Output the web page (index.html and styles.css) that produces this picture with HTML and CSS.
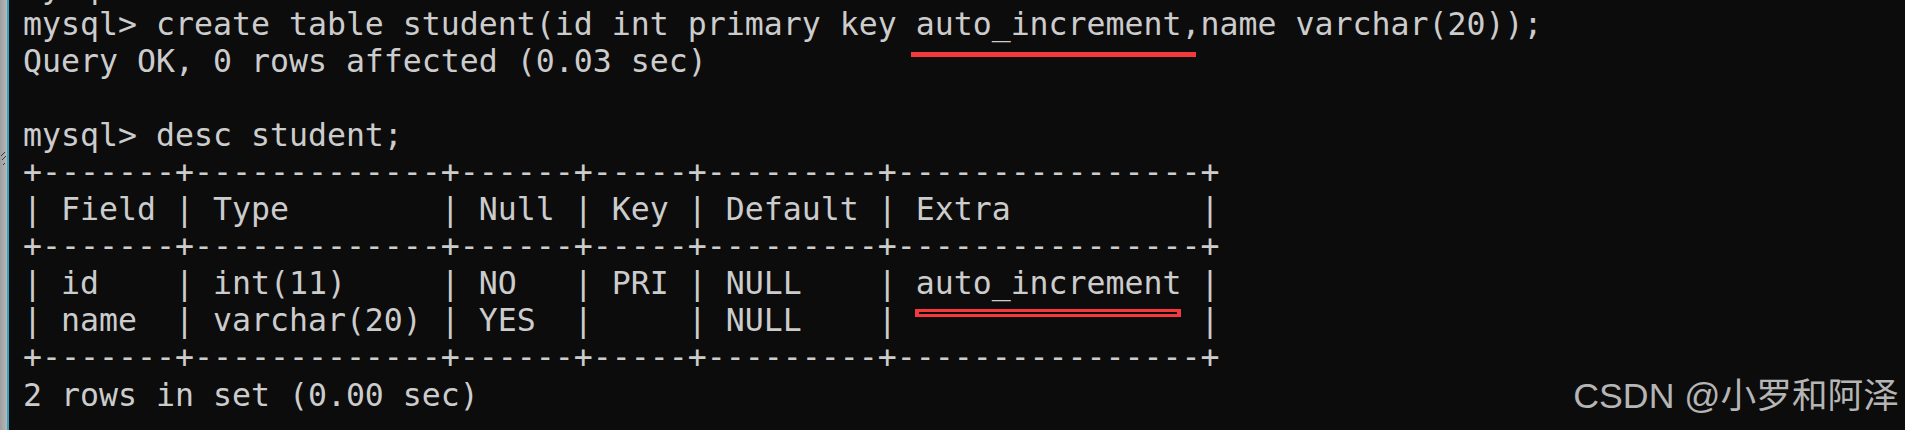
FILE: index.html
```html
<!DOCTYPE html>
<html lang="zh-CN">
<head>
<meta charset="utf-8">
<title>mysql desc student</title>
<link rel="stylesheet" href="styles.css">
</head>
<body>
<div class="window">
  <div class="edge">
    <svg class="edge-mark" width="7" height="24" viewBox="0 0 7 24"><path d="M1 6 L5 2 M2 10 L6 6 M3 15 L5 13" stroke="#333" stroke-width="1"/></svg>
  </div>
  <div class="accent"></div>
  <div class="terminal">
<pre class="screen">mysql&gt;
mysql&gt; create table student(id int primary key auto_increment,name varchar(20));
Query OK, 0 rows affected (0.03 sec)

mysql&gt; desc student;
+-------+-------------+------+-----+---------+----------------+
| Field | Type        | Null | Key | Default | Extra          |
+-------+-------------+------+-----+---------+----------------+
| id    | int(11)     | NO   | PRI | NULL    | auto_increment |
| name  | varchar(20) | YES  |     | NULL    |                |
+-------+-------------+------+-----+---------+----------------+
2 rows in set (0.00 sec)</pre>
    <div class="mark mark-line"></div>
    <div class="mark mark-box"></div>
  </div>
  <div class="watermark">CSDN @小罗和阿泽</div>
</div>
</body>
</html>
```

FILE: styles.css
```css
html, body {
  margin: 0;
  padding: 0;
  background: #0c0c0c;
}

.window {
  position: relative;
  display: flex;
  width: 1905px;
  height: 430px;
  overflow: hidden;
  background: #0c0c0c;
}

.edge {
  width: 7px;
  flex: none;
  background: linear-gradient(90deg, #9e9e9e, #b8b8b8);
  display: flex;
  flex-direction: column;
  padding-top: 150px;
  box-sizing: border-box;
}

.edge-mark {
  display: block;
}

.accent {
  width: 2px;
  flex: none;
  background: #34a1bf;
}

.terminal {
  position: relative;
  flex: 1;
  padding-left: 14px;
}

.screen {
  margin: -31.5px 0 0 0;
  font-family: "DejaVu Sans Mono", monospace;
  font-size: 31.56px;
  line-height: 37.1px;
  color: #cccccc;
  white-space: pre;
}

.mark {
  position: absolute;
  box-sizing: border-box;
}

.mark-line {
  left: 902px;
  top: 52px;
  width: 285px;
  height: 5px;
  background: #f4383c;
}

.mark-box {
  left: 906px;
  top: 309px;
  width: 266px;
  height: 8px;
  border: 3px solid #f4383c;
  border-left-width: 4px;
  border-right-width: 4px;
}

.watermark {
  position: absolute;
  right: 6px;
  top: 379px;
  font-family: "Liberation Sans", "Noto Sans CJK SC", sans-serif;
  font-size: 35.7px;
  line-height: 35.7px;
  color: #b5b5b5;
  white-space: nowrap;
}
```
